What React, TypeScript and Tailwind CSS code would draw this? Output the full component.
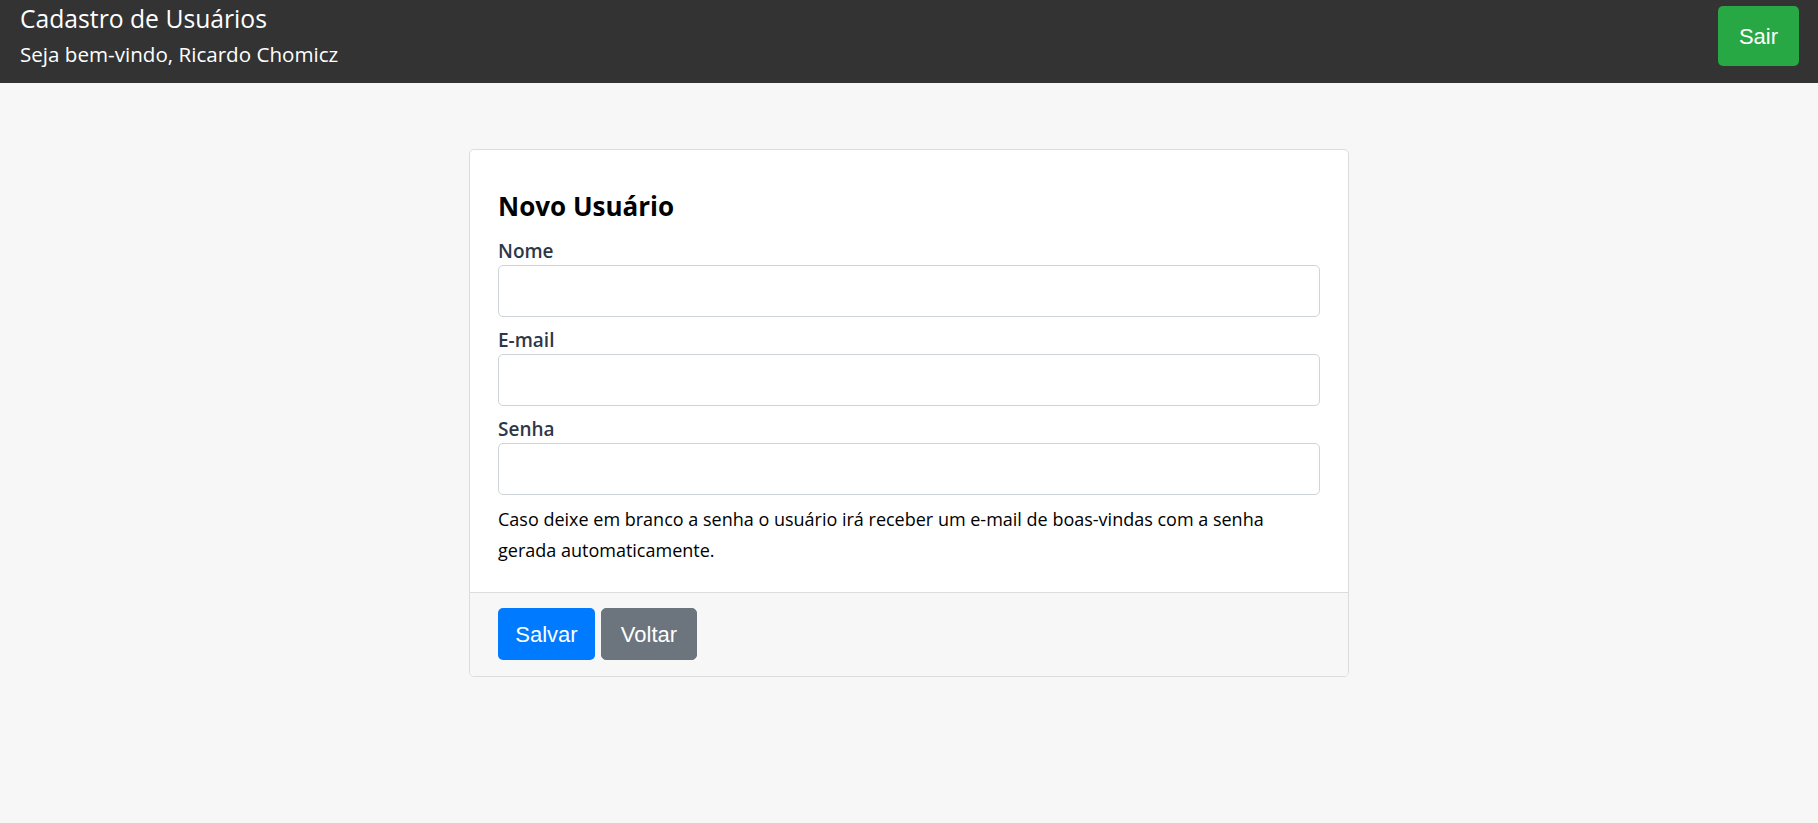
export default function App() {
  return (
    <div className="min-h-screen bg-[#f7f7f7] font-['Open_Sans',sans-serif]">
      <header className="flex h-[83px] items-start justify-between bg-[#333333] pl-5 pr-[19px] pt-[4px]">
        <div className="text-white">
          <h1 className="text-[24.7px] leading-[30px] font-normal">Cadastro de Usuários</h1>
          <p className="mt-[6px] text-[20.6px] leading-[28px]">Seja bem-vindo, Ricardo Chomicz</p>
        </div>
        <button className="mt-[2px] h-[60px] w-[81px] rounded-[5px] bg-[#28a745] font-['Liberation_Sans',sans-serif] text-[22px] text-white">
          Sair
        </button>
      </header>

      <main className="flex justify-center pt-[66px]">
        <div className="w-[880px] overflow-hidden rounded-[5px] border border-[#dcdcdc] bg-white">
          <div className="px-7 pt-7 pb-[27px]">
            <h2 className="pt-[12px] text-[26px] leading-[32px] font-bold text-black">Novo Usuário</h2>
            <form className="mt-[15px]">
              {["Nome", "E-mail", "Senha"].map((label) => (
                <div key={label} className="mb-[9px]">
                  <label className="block text-[19px] leading-[28px] font-semibold text-[#2d3748]">{label}</label>
                  <input
                    type={label === "Senha" ? "password" : label === "E-mail" ? "email" : "text"}
                    className="block h-[52px] w-full rounded-[5px] border border-[#cfd4da] bg-white px-3 outline-none"
                  />
                </div>
              ))}
              <p className="mt-px text-[18px] leading-[30.5px] text-black">
                Caso deixe em branco a senha o usuário irá receber um e-mail de boas-vindas com a senha gerada automaticamente.
              </p>
            </form>
          </div>
          <div className="flex gap-[6px] border-t border-[#dcdcdc] bg-[#f7f7f7] px-7 pt-[15px] pb-4">
            <button className="h-[52px] w-[97px] rounded-[5px] bg-[#007bff] font-['Liberation_Sans',sans-serif] text-[22px] text-white">
              Salvar
            </button>
            <button className="h-[52px] w-[96px] rounded-[5px] border border-[#6c757d] bg-[#6c757d] font-['Liberation_Sans',sans-serif] text-[22px] text-white">
              Voltar
            </button>
          </div>
        </div>
      </main>
    </div>
  )
}
